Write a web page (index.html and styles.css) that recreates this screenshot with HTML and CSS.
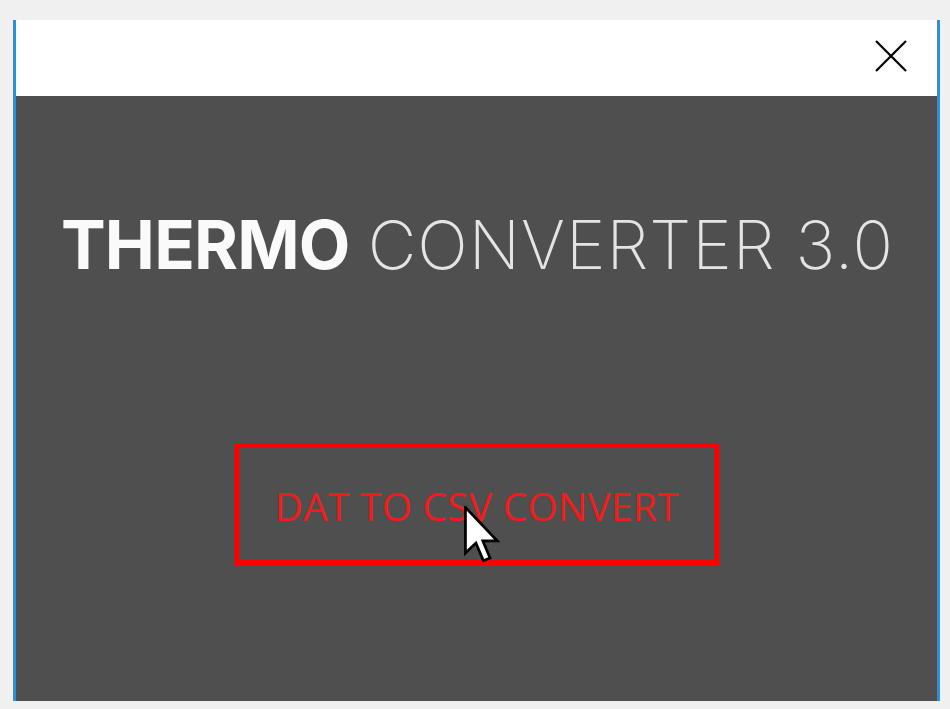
FILE: index.html
```html
<!DOCTYPE html>
<html lang="en">
<head>
  <meta charset="UTF-8" />
  <title>Thermo Converter 3.0</title>
  <link rel="stylesheet" href="styles.css">
</head>
<body>
  <div class="window">
    <div class="titlebar">
      <button class="close-btn" aria-label="Close">
        <svg width="32" height="32" viewBox="0 0 32 32">
          <path d="M1 1 L31 31 M31 1 L1 31" stroke="#000" stroke-width="2.2" fill="none"/>
        </svg>
      </button>
    </div>
    <div class="content">
      <div class="title"><span class="bold">THERMO</span><span class="thin">CONVERTER 3.0</span></div>
      <div class="convert-wrap">
        <button class="convert-btn">DAT TO CSV CONVERT</button>
        <svg class="cursor" width="36" height="58" viewBox="0 0 13 21">
          <path d="M0.5 0.5 L0.5 17 L4.3 13.4 L7 19.8 L9.4 18.8 L6.8 12.6 L12 12.6 Z" fill="#fff" stroke="#000" stroke-width="1" stroke-linejoin="miter"/>
        </svg>
      </div>
    </div>
  </div>
</body>
</html>
```

FILE: styles.css
```css
* {
  margin: 0;
  padding: 0;
  box-sizing: border-box;
}

body {
  background: #f0f0f0;
  padding: 20px 10px 8px 13px;
  height: 709px;
  overflow: hidden;
  font-family: 'Inter', sans-serif;
}

.window {
  height: 681px;
  border-left: 3px solid #2b8fdc;
  border-right: 3px solid #2b8fdc;
  display: flex;
  flex-direction: column;
}

.titlebar {
  height: 76px;
  background: #ffffff;
  display: flex;
  justify-content: flex-end;
  align-items: center;
  padding-right: 30px;
  padding-bottom: 4px;
}

.close-btn {
  border: none;
  background: transparent;
  width: 32px;
  height: 32px;
  display: flex;
}

.content {
  flex: 1;
  background: #4f4f4f;
  display: flex;
  flex-direction: column;
  align-items: center;
  padding-top: 115px;
}

.title {
  font-size: 67px;
  line-height: 1;
  color: #fafafa;
  white-space: nowrap;
  display: flex;
  gap: 18px;
  margin-left: 2px;
}

.title .bold {
  font-weight: 700;
  letter-spacing: -0.8px;
}

.title .thin {
  font-weight: 200;
  color: #e4e4e4;
  letter-spacing: 1px;
}

.convert-wrap {
  position: relative;
  margin-top: 165px;
}

.convert-btn {
  width: 485px;
  height: 122px;
  border: 5px solid #ff0000;
  background: transparent;
  color: #ee1c1c;
  font-family: 'Open Sans', sans-serif;
  font-size: 39px;
  letter-spacing: 0.2px;
  padding-top: 2px;
}

.cursor {
  position: absolute;
  left: 230px;
  top: 63px;
}
```
